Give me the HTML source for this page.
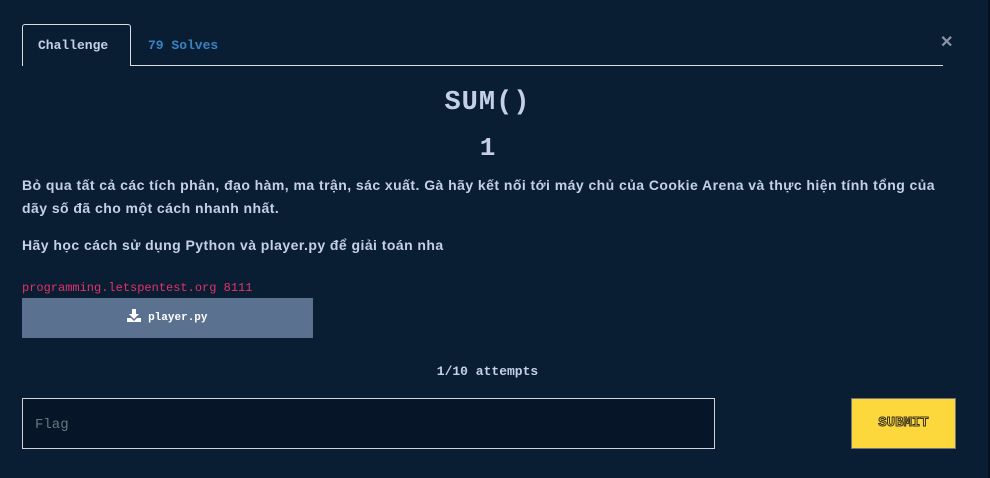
<!DOCTYPE html><html><head><style>
body{margin:0;width:990px;height:478px;background:#0a1e33;font-family:"Liberation Mono",monospace;color:#c5cfe6;position:relative;overflow:hidden}
.a{position:absolute}
.p{font-size:14px;font-weight:bold;font-family:'Liberation Sans',sans-serif;letter-spacing:0.45px;white-space:nowrap}
</style></head><body>
<div class="a" style="left:22px;top:24px;width:107px;height:41px;border:1px solid #d8dde6;border-bottom:none;border-radius:3px 3px 0 0;"></div>
<div class="a" style="left:38px;top:38px;font-size:13px;font-weight:bold;color:#c5cfe6">Challenge</div>
<div class="a" style="left:148px;top:38px;font-size:13px;font-weight:bold;color:#3b82c4">79 Solves</div>
<div class="a" style="left:130px;top:65px;width:813px;height:1px;background:#d8dde6"></div>
<div class="a" style="left:22px;top:65px;width:1px;height:1px;background:#d8dde6"></div>
<div class="a" style="left:940px;top:32px;font-size:16px;font-weight:bold;color:#8a94a6;font-family:'Liberation Sans',sans-serif">✕</div>
<div class="a" style="left:0;width:975px;top:88px;text-align:center;font-size:27px;font-weight:bold;letter-spacing:1px">SUM()</div>
<div class="a" style="left:0;width:975px;top:133px;text-align:center;font-size:26px;font-weight:bold">1</div>
<div class="a p" style="left:22px;top:174px;line-height:23px;">Bỏ qua tất cả các tích phân, đạo hàm, ma trận, sác xuất. Gà hãy kết nối tới máy chủ của Cookie Arena và thực hiện tính tổng của<br>dãy số đã cho một cách nhanh nhất.</div>
<div class="a p" style="left:22px;top:237px;">Hãy học cách sử dụng Python và player.py để giải toán nha</div>
<div class="a" style="left:22px;top:281px;font-size:12px;color:#e2326c">programming.letspentest.org 8111</div>
<div class="a" style="left:22px;top:298px;width:291px;height:40px;background:#5b7190;color:#fff;font-size:11px;font-weight:bold;text-align:center;line-height:40px"><svg width="14" height="13" viewBox="0 0 14 13" style="vertical-align:-2px"><path d="M5 0h4v5h3l-5 5-5-5h3z" fill="#fff"/><path d="M0 9h4l3 3 3-3h4v4H0z" fill="#fff"/></svg> player.py</div>
<div class="a" style="left:0;width:975px;top:364px;text-align:center;font-size:13px;font-weight:bold">1/10 attempts</div>
<div class="a" style="left:22px;top:398px;width:691px;height:49px;background:#061628;border:1px solid #d0d4da"></div>
<div class="a" style="left:35px;top:417px;font-size:14px;color:#6c7580">Flag</div>
<div class="a" style="left:851px;top:398px;width:103px;height:49px;background:#fdd83c;border:1px solid #6c757d;text-align:center;line-height:49px;font-size:14px;font-weight:bold;color:#fdd83c;-webkit-text-stroke:1px #3a3320">SUBMIT</div>
<div class="a" style="left:988px;top:0;width:2px;height:478px;background:#06121f"></div>
</body></html>
